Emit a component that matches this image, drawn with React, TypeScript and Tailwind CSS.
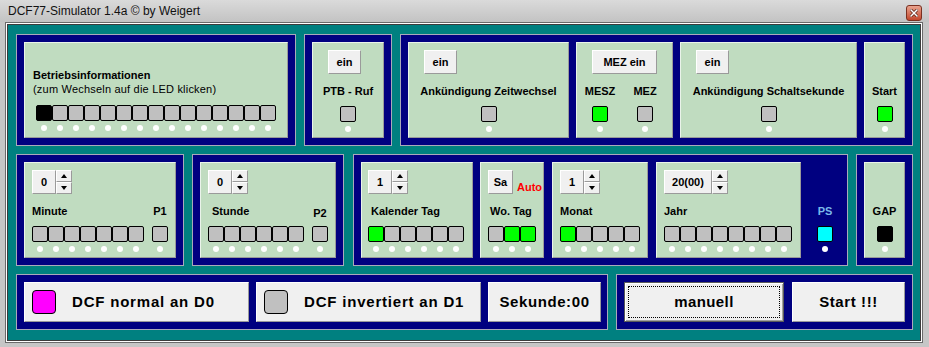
import React from "react";

const ledCls: Record<string, string> = {
  g: "bg-[#c0c0c0]",
  G: "bg-[#00ff00]",
  k: "bg-black",
  c: "bg-[#00ffff]",
};

const raised =
  "bg-[#f0f0f0] border border-t-white border-l-white border-b-[#9a9a9a] border-r-[#9a9a9a]";
const green =
  "h-full bg-[#c0dcc0] border border-t-[#eaf3ea] border-l-[#eaf3ea] border-b-[#9a9a9a] border-r-[#9a9a9a] flex flex-col";

function Led({ c = "g" }: { c?: string }) {
  return <div className={`w-4 h-4 shrink-0 border border-black rounded-[2px] ${ledCls[c]}`} />;
}

function Leds({ s, mt = "mt-2" }: { s: string; mt?: string }) {
  return (
    <div className={`flex ${mt}`}>
      {s.split("").map((c, i) => (
        <Led key={i} c={c} />
      ))}
    </div>
  );
}

function Dots({ n }: { n: number }) {
  return (
    <div className="flex mt-1 h-[6px]">
      {Array.from({ length: n }).map((_, i) => (
        <div key={i} className="w-4 flex justify-center">
          <div className="w-[6px] h-[6px] rounded-full bg-white" />
        </div>
      ))}
    </div>
  );
}

function Label({ children, className = "" }: { children: React.ReactNode; className?: string }) {
  return (
    <div className={`mt-[10px] h-[14px] leading-[14px] text-[11px] font-bold whitespace-nowrap ${className}`}>
      {children}
    </div>
  );
}

function Btn({ children, className = "" }: { children: React.ReactNode; className?: string }) {
  return (
    <div className={`h-6 shrink-0 flex items-center justify-center text-[11px] font-bold ${raised} ${className}`}>
      {children}
    </div>
  );
}

function Arrow({ up }: { up: boolean }) {
  return (
    <div className={`h-3 flex items-center justify-center ${raised}`}>
      <svg width="6" height="4" viewBox="0 0 6 4">
        <path d={up ? "M0 4h6L3 0z" : "M0 0h6L3 4z"} fill="black" />
      </svg>
    </div>
  );
}

function Spin({ value, w = "w-6" }: { value: string; w?: string }) {
  return (
    <div className="flex h-6 self-start">
      <div className={`${w} h-6 flex items-center justify-center text-[11px] font-bold ${raised}`}>{value}</div>
      <div className="flex flex-col w-4">
        <Arrow up />
        <Arrow up={false} />
      </div>
    </div>
  );
}

function Navy({ className = "", children }: { className?: string; children: React.ReactNode }) {
  return (
    <div className={`h-full shrink-0 bg-[#000080] border border-[#a9a9b9] p-[7px] flex ${className}`}>
      {children}
    </div>
  );
}

function CenterPanel({
  className,
  btn,
  btnW,
  label,
  led = "g",
}: {
  className: string;
  btn?: string;
  btnW?: string;
  label: string;
  led?: string;
}) {
  return (
    <div className={`${green} pt-[7px] items-center ${className}`}>
      {btn ? <Btn className={`self-start ml-[15px] ${btnW}`}>{btn}</Btn> : <div className="h-6" />}
      <Label>{label}</Label>
      <Leds s={led} />
      <Dots n={1} />
    </div>
  );
}

function BigPanel({ led, text }: { led: string; text: string }) {
  return (
    <div className={`h-full w-[225px] shrink-0 ${raised} flex items-center pl-[7px]`}>
      <div className={`w-6 h-6 rounded-[4px] border border-black ${led}`} />
      <span className="ml-4 text-[15px] tracking-[0.8px] font-bold whitespace-nowrap">{text}</span>
    </div>
  );
}

export default function App() {
  return (
    <div className="w-[929px] h-[347px] bg-[#c6c6c6] flex flex-col font-['Liberation_Sans',Arial,sans-serif] text-black overflow-hidden">
      {/* title bar */}
      <div className="h-[22px] shrink-0 flex justify-between pl-2 pr-[7px] bg-gradient-to-b from-[#dadada] to-[#c3c3c3]">
        <span className="mt-[3px] text-[12px] leading-[16px] text-[#111]">DCF77-Simulator 1.4a © by Weigert</span>
        <div className="mt-[5px] w-4 h-4 rounded-[3px] border border-[#7a3020] bg-gradient-to-b from-[#e9a38e] to-[#c2452a] flex items-center justify-center">
          <svg width="8" height="8" viewBox="0 0 8 8">
            <path d="M1 1L7 7M7 1L1 7" stroke="#5a2010" strokeWidth="3" strokeLinecap="square" />
            <path d="M1 1L7 7M7 1L1 7" stroke="white" strokeWidth="1.5" strokeLinecap="square" />
          </svg>
        </div>
      </div>

      {/* client frame */}
      <div className="ml-[5px] mr-[6px] mb-[4px] flex-1 border border-[#6a6a6a]">
        <div className="h-full border border-white">
          <div className="h-full border border-[#3c3c3c] bg-[#008080] pl-2 pr-[7px] pt-[9px] pb-[10px] flex flex-col gap-2">
            {/* Row 1 */}
            <div className="h-[112px] shrink-0 flex gap-2">
              <Navy className="w-[280px]">
                <div className={`${green} w-[264px] pl-2 pt-[25px]`}>
                  <div className="h-[14px] leading-[14px] text-[11px] font-bold">Betriebsinformationen</div>
                  <div className="h-[14px] leading-[14px] text-[11px] tracking-[0.2px]">(zum Wechseln auf die LED klicken)</div>
                  <div className="ml-[3px]">
                    <Leds s="kgggggggggggggg" mt="mt-[9px]" />
                    <Dots n={15} />
                  </div>
                </div>
              </Navy>
              <Navy className="w-[88px]">
                <CenterPanel className="w-[72px]" btn="ein" btnW="w-[33px]" label="PTB - Ruf" />
              </Navy>
              <Navy className="w-[513px] gap-[7px]">
                <CenterPanel className="w-[161px]" btn="ein" btnW="w-[33px]" label="Ankündigung Zeitwechsel" />
                <div className={`${green} pt-[7px] w-[97px]`}>
                  <Btn className="self-start ml-[15px] w-[65px]">MEZ ein</Btn>
                  <div className="flex ml-[7px] gap-[13px]">
                    <div className="w-8 flex flex-col items-center">
                      <Label>MESZ</Label>
                      <Leds s="G" />
                      <Dots n={1} />
                    </div>
                    <div className="w-8 flex flex-col items-center">
                      <Label>MEZ</Label>
                      <Leds s="g" />
                      <Dots n={1} />
                    </div>
                  </div>
                </div>
                <CenterPanel className="w-[177px]" btn="ein" btnW="w-[33px]" label="Ankündigung Schaltsekunde" />
                <CenterPanel className="w-[41px]" label="Start" led="G" />
              </Navy>
            </div>

            {/* Row 2 */}
            <div className="h-[112px] shrink-0 flex gap-2">
              <Navy className="w-[168px]">
                <div className={`${green} pt-[7px] pl-[7px] w-[152px]`}>
                  <Spin value="0" />
                  <div className="flex gap-2">
                    <div className="flex flex-col">
                      <Label>Minute</Label>
                      <Leds s="ggggggg" />
                      <Dots n={7} />
                    </div>
                    <div className="flex flex-col items-center">
                      <Label>P1</Label>
                      <Leds s="g" />
                      <Dots n={1} />
                    </div>
                  </div>
                </div>
              </Navy>
              <Navy className="w-[152px]">
                <div className={`${green} pt-[7px] pl-[7px] w-[136px]`}>
                  <Spin value="0" />
                  <div className="flex gap-2">
                    <div className="flex flex-col">
                      <Label className="pl-1">Stunde</Label>
                      <Leds s="gggggg" />
                      <Dots n={6} />
                    </div>
                    <div className="flex flex-col items-center">
                      <Label className="mt-[12px]">P2</Label>
                      <Leds s="g" mt="mt-[6px]" />
                      <Dots n={1} />
                    </div>
                  </div>
                </div>
              </Navy>
              <Navy className="w-[495px] ml-[1px]">
                <div className={`${green} pt-[7px] pl-[6px] w-[112px]`}>
                  <Spin value="1" />
                  <Label className="pl-[3px]">Kalender Tag</Label>
                  <Leds s="Gggggg" />
                  <Dots n={6} />
                </div>
                <div className={`${green} pt-[7px] pl-[7px] ml-[7px] w-[64px]`}>
                  <div className="flex items-end h-6">
                    <Btn className="w-[25px]">Sa</Btn>
                    <span className="ml-1 text-[11px] leading-[14px] font-bold text-[#ff0000]">Auto</span>
                  </div>
                  <Label className="pl-[2px]">Wo. Tag</Label>
                  <Leds s="gGG" />
                  <Dots n={3} />
                </div>
                <div className={`${green} pt-[7px] pl-[7px] ml-2 w-[96px]`}>
                  <Spin value="1" />
                  <Label>Monat</Label>
                  <Leds s="Ggggg" />
                  <Dots n={5} />
                </div>
                <div className={`${green} pt-[7px] pl-[7px] ml-2 w-[145px]`}>
                  <Spin value="20(00)" w="w-12" />
                  <Label>Jahr</Label>
                  <Leds s="gggggggg" />
                  <Dots n={8} />
                </div>
                <div className="w-[39px] pl-4 pt-2 flex flex-col">
                  <div className="h-6" />
                  <Label className="text-[#7ab8ea] w-4 flex justify-center">PS</Label>
                  <Leds s="c" />
                  <Dots n={1} />
                </div>
              </Navy>
              <Navy className="w-[57px]">
                <CenterPanel className="w-[41px]" label="GAP" led="k" />
              </Navy>
            </div>

            {/* Row 3 */}
            <div className="h-[56px] shrink-0 flex gap-2">
              <Navy className="w-[592px] gap-[7px]">
                <BigPanel led="bg-[#ff00ff]" text="DCF normal an D0" />
                <BigPanel led="bg-[#c0c0c0]" text="DCF invertiert an D1" />
                <div className={`h-full w-[113px] shrink-0 ${raised} flex items-center justify-center`}>
                  <span className="text-[15px] tracking-[0.6px] font-bold whitespace-nowrap">Sekunde:00</span>
                </div>
              </Navy>
              <Navy className="w-[297px] gap-2">
                <div className="relative h-full w-[160px] shrink-0 bg-[#f0f0f0] border border-[#5a5a5a] shadow-[inset_1px_1px_0_white,inset_-1px_-1px_0_#a0a0a0] flex items-center justify-center">
                  <div className="absolute inset-[3px] border border-dotted border-black" />
                  <span className="text-[15px] tracking-[0.4px] font-bold">manuell</span>
                </div>
                <div className={`h-full w-[113px] shrink-0 ${raised} flex items-center justify-center`}>
                  <span className="text-[15px] tracking-[0.6px] font-bold">Start !!!</span>
                </div>
              </Navy>
            </div>
          </div>
        </div>
      </div>
    </div>
  );
}
